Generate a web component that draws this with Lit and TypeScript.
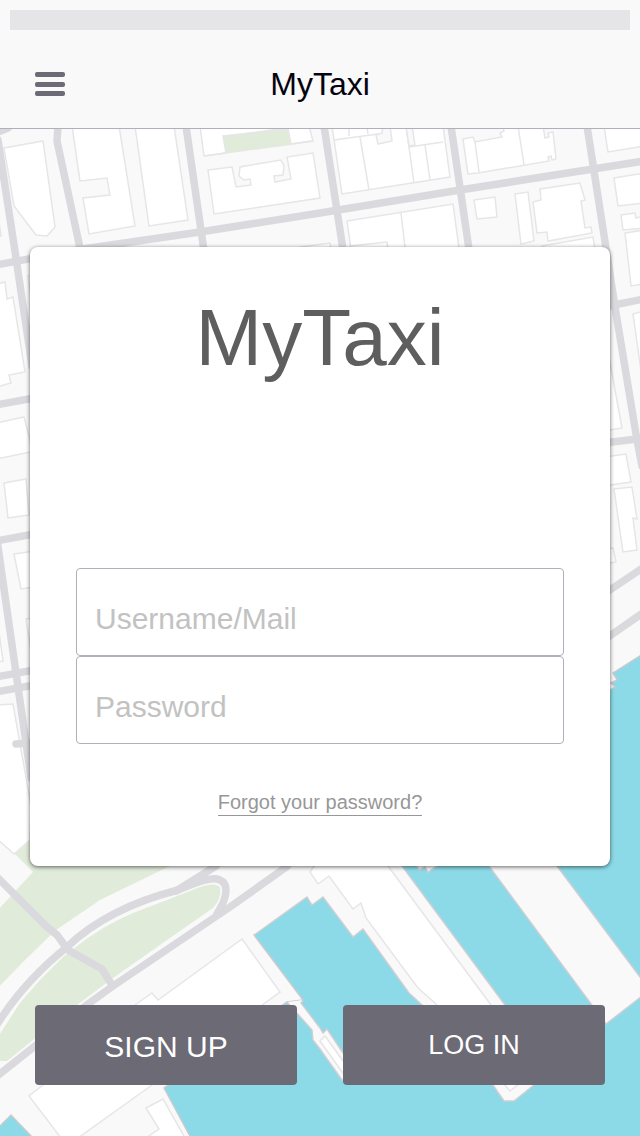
import { LitElement, html, css, svg } from "lit";
import { customElement } from "lit/decorators.js";

const ROADS: string[] = [
  "M-2 132L8 128",
  "M-2 140L16 258L32 366",
  "M58 126L57 141L83 262",
  "M186 126L205 258",
  "M-4 265L83 249L200 232L320 213L460 190L593 169L644 161",
  "M324 126L344 256",
  "M451 126L470 256",
  "M587 126L606 248L615 307L637 440L642 466",
  "M604 307L644 299",
  "M604 443L637 439",
  "M604 594L644 567",
  "M604 640L644 612",
  "M-4 405L34 398",
  "M-4 541L34 534",
  "M-4 677L34 670",
  "M-4 692L34 685",
  "M-3 540L17 680L31 778",
  "M16 744L28 743",
  "M330 836L230 907L113 986L88 1004L35 1046L-4 1077",
  "M-4 1026L0 1020Q26 980 67 947Q108 908 178 890Q208 877 217 879Q231 882 223 903L217 914",
  "M176 891L216 866",
  "M-4 876L47 927L57 935L68 950L102 969L112 985",
];

const BUILDINGS: string[] = [
  "M4 148L43 141L55 227L47 236L36 235L14 206Z",
  "M72 126L80 181L107 178L110 195L83 198L89 234L135 226L119 126Z",
  "M135 126L149 226L188 220L174 126Z",
  "M200 126L204 156L313 141L309 126Z",
  "M208 170L232 167L236 187L251 185L250 179L244 180L239 176L240 167L281 160L284 166L283 175L274 176L275 182L291 179L287 157L313 153L320 198L214 214Z",
  "M332 126L342 194L450 177L443 126Z",
  "M463 139L473 137L475 142L502 137L500 133L504 131L503 126L543 126L545 138L549 137L548 133L553 132L556 159L552 160L551 156L548 157L549 161L478 173L468 174Z",
  "M604 126L608 152L644 146V126Z",
  "M474 200L495 197L497 217L477 219Z",
  "M515 194L528 192L534 241L521 244Z",
  "M533 202L541 200L540 189L580 183L585 200L581 201L585 228L591 227L592 233L548 241L547 232L537 233Z",
  "M614 178L644 173V203L618 206Z",
  "M621 215L635 213L636 218L644 216V228L623 230Z",
  "M625 233L644 230V284L631 286Z",
  "M347 221L453 204L460 256H352Z",
  "M350 246L387 242L389 256H351Z",
  "M542 246L593 237L596 256H543Z",
  "M300 247L330 243L332 256H300Z",
  "M-4 284L5 282L7 299L13 297L25 372L9 375L11 383L-4 387Z",
  "M-4 423L24 417L30 440L31 452L-4 459Z",
  "M4 483L26 479L29 515L8 518Z",
  "M14 554L34 551V587L21 589Z",
  "M26 619L34 618V670Z",
  "M28 276L34 275V320Z",
  "M-4 610L3 661L-4 662Z",
  "M-4 705L13 704L31 806L30 840L14 854L-4 838Z",
  "M-4 200L1 236L-4 237Z",
  "M633 314L644 311V392Z",
  "M604 330L622 428L604 431Z",
  "M604 457L626 454L631 482L604 486Z",
  "M614 489L632 487L637 519L633 518L637 550L623 552Z",
  "M604 549L613 548L616 562L604 564Z",
  "M242 939L280 992L152 1085L78 1138H61L29 1096L43 1085L135 1005L152 993L158 1000Z",
  "M146 1108L163 1099L185 1138H146L159 1129Z",
];

const PARTITIONS =
  "M334 140L363 136L386 133M349 127V136M367 127L368 134M360 137L369 190M409 147L443 142M406 126L414 183M425 145L430 180M475 142L479 172M518 126L524 165M401 213L406 256";

const PIER_BUILDINGS: string[] = [
  "M317 862L310 872L318 884L329 876L353 909L361 903L366 918L418 988L435 1003L510 1091L530 1075L491 1005L385 862Z",
  "M320 1041L325 1036L354 1076L345 1076Z",
];

@customElement("city-map")
export class CityMap extends LitElement {
  static styles = css`
    :host {
      display: block;
      min-height: 0;
      contain: size;
    }
    .map {
      display: block;
      width: 100%;
      height: 100%;
    }
    .land {
      fill: #f9f9f9;
    }
    .park {
      fill: #e0ebda;
    }
    .water {
      fill: #8cdae7;
      stroke: #cccacf;
      stroke-width: 1.4;
    }
    .shore {
      fill: #f9f9f9;
      stroke: #d0ced3;
      stroke-width: 1.4;
    }
    .road {
      fill: none;
      stroke: #dad9de;
      stroke-width: 7.5;
      stroke-linecap: round;
      stroke-linejoin: round;
    }
    .building,
    .partition,
    .yard {
      fill: #ffffff;
      stroke: #e6e6e8;
      stroke-width: 1.5;
    }
    .partition {
      fill: none;
    }
    .yard {
      fill: #f9f9f9;
    }
  `;

  render() {
    return html`
      <svg class="map" viewBox="0 129 640 1007" preserveAspectRatio="xMidYMid slice" aria-hidden="true">
        <rect class="land" x="-400" y="-400" width="1500" height="2000" />
        <path class="park" d="M15 854L40 832H240L170 866L100 900L56 930L25 960L-4 990V912L33 872Z" />
        <path
          class="park"
          d="M-4 1040L20 1003L40 980L63 957L72 950Q100 927 133 913L167 900L200 887Q215 882 220 887Q222 898 213 908L167 940L113 978L77 1005L33 1040L7 1061H-4Z"
        />
        ${BUILDINGS.map((d) => svg`<path class="building" d=${d} />`)}
        <path class="partition" d=${PARTITIONS} />
        <path class="yard" d="M383 126L382 133L376 135L378 144L392 141L390 126" />
        <path class="yard" d="M406 126L409 146L415 145L412 126" />
        <path class="park" d="M223 136L288 127L291 144L226 153Z" />
        <path class="partition" d="M204 156L226 153L223 136L288 129L291 144L312 141" />
        ${ROADS.map((d) => svg`<path class="road" d=${d} />`)}
        <path
          class="water"
          d="M646 652L613 673L617 680L611 683L615 687L608 691L400 850L307 897L254 935L303 1000L287 1002L164 1088L192 1140H646Z"
        />
        <path class="water" d="M-4 1130L11 1115L34 1139H-4Z" />
        <path
          class="shore"
          d="M254 935L307 897L312 905L323 897L353 937L363 929L409 993L422 1005L493 1085L504 1101L514 1101L550 1072L505 1005L402 866L380 836H310"
        />
        <path class="land" d="M254 934L306 896L400 864L380 836H300L290 870Z" />
        <path
          class="shore"
          d="M303 1000L301 1003L320 1028L323 1033L327 1029L343 1053L360 1080H342L320 1049L313 1040L312 1030L287 1002"
        />
        <path class="shore" d="M470 840L489 866L606 1024L646 993V985L557 866L537 840Z" />
        <path class="shore" d="M415 862L419 870L425 867L428 872L440 864Z" />
        ${PIER_BUILDINGS.map((d) => svg`<path class="building" d=${d} />`)}
      </svg>
    `;
  }
}

@customElement("app-root")
export class AppRoot extends LitElement {
  static styles = css`
    :host {
      display: flex;
      flex-direction: column;
      min-height: 100vh;
      background: #f9f9f9;
      font-family: "Liberation Sans", Arial, Helvetica, sans-serif;
    }
    * {
      box-sizing: border-box;
    }
    .header {
      padding: 10px 10px 0;
      border-bottom: 1px solid #b1b0ba;
      background: #f9f9f9;
    }
    .status {
      height: 20px;
      background: #e5e5e7;
    }
    .bar {
      display: grid;
      grid-template-columns: 30px 1fr 30px;
      align-items: center;
      padding: 30px 25px 20px;
    }
    .menu {
      display: flex;
      padding: 0;
      border: 0;
      background: none;
      cursor: pointer;
    }
    .menu-icon {
      width: 30px;
      height: 24px;
      fill: #6b6a75;
    }
    .title {
      margin: 0;
      color: #05030f;
      font-size: 32px;
      font-weight: 400;
      line-height: 48px;
      text-align: center;
    }
    .stage {
      display: grid;
      flex: 1;
    }
    .map,
    .content {
      grid-area: 1 / 1;
      min-width: 0;
    }
    .content {
      z-index: 1;
      display: flex;
      flex-direction: column;
      justify-content: space-between;
      gap: 40px;
      padding: 118px 30px 51px;
    }
    .card {
      display: flex;
      flex-direction: column;
      align-items: center;
      padding: 47px 46px 50px;
      border-radius: 8px;
      background: #ffffff;
      box-shadow: 0 1px 4px rgba(0, 0, 0, 0.6);
    }
    .logo {
      margin: 0 0 186px;
      color: #5e5e5e;
      font-size: 80px;
      font-weight: 400;
      line-height: 88px;
    }
    .label {
      display: block;
      width: 100%;
    }
    .field {
      display: block;
      width: 100%;
      height: 88px;
      padding: 13px 18px 0;
      border: 1px solid #b1b0ba;
      border-radius: 4px;
      background: #ffffff;
      color: #5e5e5e;
      font: inherit;
      font-size: 30px;
    }
    .field::placeholder {
      color: #c2c2c2;
      opacity: 1;
    }
    .forgot {
      margin-top: 46px;
      border-bottom: 1px solid #979797;
      color: #979797;
      font-size: 20px;
      line-height: 25px;
      text-decoration: none;
    }
    .actions {
      display: grid;
      grid-template-columns: 1fr 1fr;
      gap: 46px;
      padding: 0 5px;
    }
    .action {
      height: 80px;
      padding: 0;
      border: 0;
      border-radius: 4px;
      background: #6b6a75;
      color: #ffffff;
      font: inherit;
      font-size: 27px;
      cursor: pointer;
    }
    .primary {
      padding-top: 4px;
      font-size: 30px;
    }
  `;

  render() {
    return html`
      <header class="header">
        <div class="status"></div>
        <div class="bar">
          <button class="menu" type="button" aria-label="Menu">
            <svg class="menu-icon" viewBox="0 0 30 24" aria-hidden="true">
              <rect width="30" height="5" rx="2" />
              <rect y="10" width="30" height="5" rx="2" />
              <rect y="19" width="30" height="5" rx="2" />
            </svg>
          </button>
          <h1 class="title">MyTaxi</h1>
        </div>
      </header>
      <main class="stage">
        <city-map class="map"></city-map>
        <form class="content" @submit=${(e: Event) => e.preventDefault()}>
          <section class="card">
            <h2 class="logo">MyTaxi</h2>
            <label class="label" for="username">
              <input class="field" id="username" type="text" placeholder="Username/Mail" aria-label="Username/Mail" />
            </label>
            <label class="label" for="password">
              <input class="field" id="password" type="password" placeholder="Password" aria-label="Password" />
            </label>
            <a class="forgot" href="#forgot">Forgot your password?</a>
          </section>
          <div class="actions">
            <button class="action primary" type="button">SIGN UP</button>
            <button class="action" type="submit">LOG IN</button>
          </div>
        </form>
      </main>
    `;
  }
}
